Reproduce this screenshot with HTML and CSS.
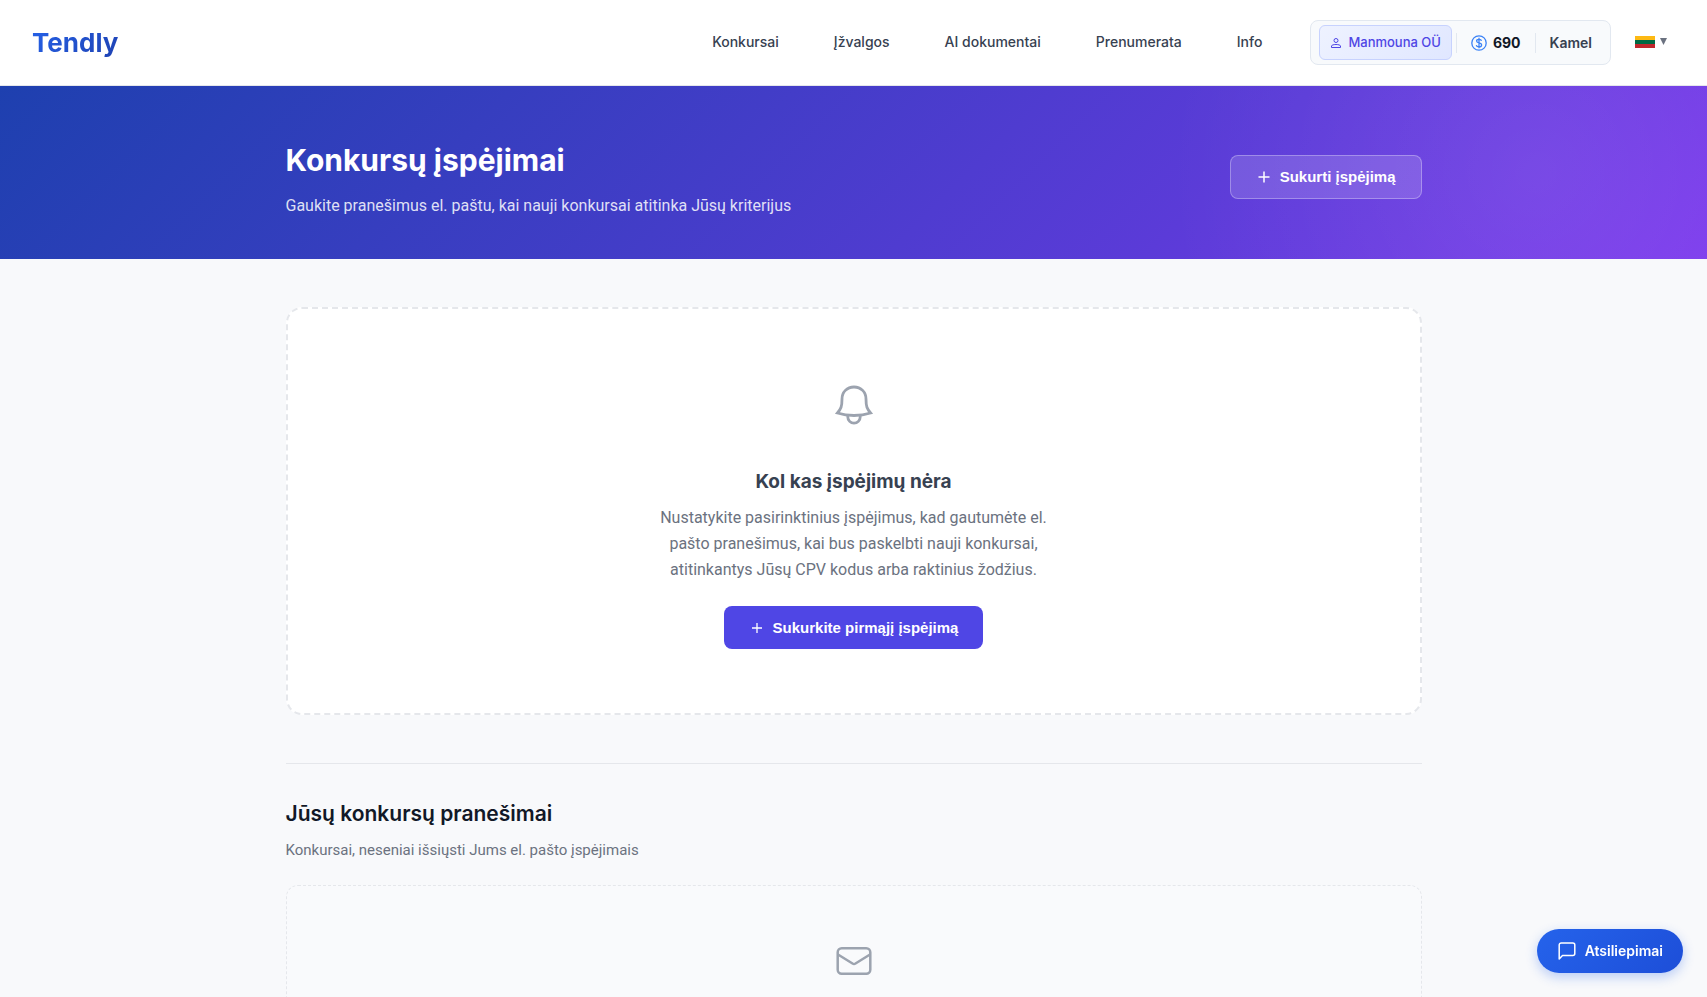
FILE: index.html
```
<!DOCTYPE html>
<html lang="lt">
<head>
  <meta charset="UTF-8">
  <meta name="viewport" content="width=device-width, initial-scale=1.0">
  <title>Konkursų įspėjimai - Tendly</title>
  <link rel="stylesheet" href="styles.css">
</head>
<body>
  <header class="header">
    <a href="#" class="logo">Tendly</a>
    <nav class="nav">
      <a href="#">Konkursai</a>
      <a href="#">Įžvalgos</a>
      <a href="#">AI dokumentai</a>
      <a href="#">Prenumerata</a>
      <a href="#">Info</a>
    </nav>
    <div class="user-box">
      <a href="#" class="company">
        <svg width="12" height="12" viewBox="0 0 12 12" fill="none" stroke="currentColor">
          <circle cx="6" cy="3.500" r="2"/>
          <path d="M1.500 10.500V9c0-.8 2-1.500 4.500-1.500s4.500.7 4.500 1.500v1.500z"/>
        </svg>
        Manmouna OÜ
      </a>
      <a href="#" class="credits">
        <svg width="16" height="16" viewBox="0 0 16 16" fill="none" stroke="currentColor" stroke-width="1.300">
          <circle cx="8" cy="8" r="7.200"/>
          <path d="M10.500 5.800C10.300 4.800 9.300 4.300 8 4.300S5.600 4.900 5.600 6s1 1.600 2.400 1.900 2.600.8 2.600 2-1.200 1.900-2.600 1.900-2.500-.6-2.700-1.700M8 2.800v10.400"/>
        </svg>
        690
      </a>
      <a href="#" class="user-name">Kamel</a>
    </div>
    <button class="lang" aria-label="Kalba">
      <svg class="flag" width="20" height="12" viewBox="0 0 20 12">
        <path fill="#fdb913" d="M0 0h20v4H0z"/>
        <path fill="#006a44" d="M0 4h20v4H0z"/>
        <path fill="#c1272d" d="M0 8h20v4H0z"/>
      </svg>
      <svg width="7" height="7" viewBox="0 0 7 7"><path fill="#6b7280" d="M0 0h7L3.500 7z"/></svg>
    </button>
  </header>

  <section class="hero">
    <div class="container hero-content">
      <div>
        <h1>Konkursų įspėjimai</h1>
        <p>Gaukite pranešimus el. paštu, kai nauji konkursai atitinka Jūsų kriterijus</p>
      </div>
      <button class="btn btn-glass">
        <svg width="16" height="16" viewBox="0 0 16 16" fill="none" stroke="currentColor" stroke-width="1.500"><path d="M8 2.500v11M2.500 8h11"/></svg>
        Sukurti įspėjimą
      </button>
    </div>
  </section>

  <main class="container">
    <section class="empty-state">
      <div class="empty-icon">
        <svg width="48" height="48" viewBox="0 0 48 48" fill="none" stroke="currentColor" stroke-width="2.800" stroke-linejoin="miter">
          <path d="M24 6c-7 0-12 5-12 12 0 7.500-1 10-4.600 14 5 1.600 10 2.500 16.600 2.500s11.600-.9 16.600-2.500C37 28 36 25.500 36 18c0-7-5-12-12-12z"/>
          <path d="M17.800 34.500v1.500a6.200 6.200 0 0 0 12.400 0v-1.500"/>
        </svg>
      </div>
      <h3>Kol kas įspėjimų nėra</h3>
      <p>Nustatykite pasirinktinius įspėjimus, kad gautumėte el. pašto pranešimus, kai bus paskelbti nauji konkursai, atitinkantys Jūsų CPV kodus arba raktinius žodžius.</p>
      <button class="btn btn-primary">
        <svg width="16" height="16" viewBox="0 0 16 16" fill="none" stroke="currentColor" stroke-width="1.300"><path d="M8 3v10M3 8h10"/></svg>
        Sukurkite pirmąjį įspėjimą
      </button>
    </section>

    <section class="notifications">
      <h2>Jūsų konkursų pranešimai</h2>
      <p class="subtitle">Konkursai, neseniai išsiųsti Jums el. pašto įspėjimais</p>
      <div class="notifications-empty">
        <svg width="48" height="48" viewBox="0 0 48 48" fill="none" stroke="currentColor" stroke-width="2.500" stroke-linejoin="round">
          <rect x="7.700" y="11.200" width="32.600" height="25.600" rx="4"/>
          <path d="M8 17.500l14.500 9a3 3 0 0 0 3 0l14.500-9"/>
        </svg>
      </div>
    </section>
  </main>

  <button class="feedback">
    <svg width="20" height="20" viewBox="0 0 20 20" fill="none" stroke="currentColor" stroke-width="1.500" stroke-linejoin="round">
      <path d="M2.200 18V4a2 2 0 0 1 2-2h11.600a2 2 0 0 1 2 2v8.500a2 2 0 0 1-2 2H5.500z"/>
    </svg>
    Atsiliepimai
  </button>
</body>
</html>
```
FILE: styles.css
```
* {
  box-sizing: border-box;
  margin: 0;
  padding: 0;
}

body {
  font-family: Inter, "Liberation Sans", sans-serif;
  font-size: 16px;
  line-height: 26px;
  color: #111827;
  background: #f8f9fb;
  overflow-x: hidden;
}

html {
  scrollbar-width: none;
}

a {
  color: inherit;
  text-decoration: none;
}

button {
  font-family: inherit;
  cursor: pointer;
}

p {
  font-family: Roboto, Inter, sans-serif;
}

svg {
  display: block;
  flex-shrink: 0;
}

.container {
  max-width: 1200px;
  margin: 0 auto;
  padding: 0 32px;
}

/* header */
.header {
  display: flex;
  align-items: center;
  padding: 20px 40px 20px 32px;
  background: #fff;
  border-bottom: 1px solid #e5e7eb;
}

.logo {
  font-size: 26px;
  font-weight: 700;
  line-height: 45px;
  background: linear-gradient(135deg, #2563eb, #1e40af);
  -webkit-background-clip: text;
  background-clip: text;
  color: transparent;
}

.nav {
  display: flex;
  gap: 55px;
  margin-left: auto;
  margin-right: 48px;
  padding-bottom: 2px;
  font-size: 14px;
  font-weight: 500;
  color: #374151;
}

.user-box {
  display: flex;
  align-items: center;
  padding: 4px 8px;
  background: #f8fafc;
  border: 1px solid #e2e8f0;
  border-radius: 8px;
  font-size: 14px;
  font-weight: 600;
  line-height: 20px;
}

.company {
  display: flex;
  align-items: center;
  gap: 6px;
  padding: 0 10px;
  margin-right: 4px;
  line-height: 33px;
  font-size: 13px;
  font-weight: 500;
  color: #4f46e5;
  background: linear-gradient(135deg, #eef2ff, #e0e7ff);
  border: 1px solid #c7d2fe;
  border-radius: 6px;
}

.credits {
  display: flex;
  align-items: center;
  gap: 6px;
  padding: 0 14px;
  border-left: 1px solid #e2e8f0;
  border-right: 1px solid #e2e8f0;
  font-weight: 700;
}

.credits svg {
  color: #3b82f6;
}

.user-name {
  padding: 0 10px 0 14px;
  color: #374151;
}

.lang {
  display: flex;
  align-items: center;
  gap: 5px;
  margin-left: 24px;
  padding-bottom: 2px;
  background: none;
  border: none;
}

/* hero */
.hero {
  padding: 48px 0 40px;
  color: #fff;
  background: radial-gradient(circle at 90% 50%, rgba(255, 255, 255, 0.08), transparent 24%), linear-gradient(135deg, #1e40af 0%, #5b3bd8 70%, #7c3aed 100%);
}

.hero-content {
  display: flex;
  align-items: center;
  justify-content: space-between;
}

.hero h1 {
  margin-bottom: 7px;
  font-size: 30px;
  font-weight: 700;
  line-height: 52px;
}

.hero p {
  color: rgba(255, 255, 255, 0.85);
}

.btn {
  display: inline-flex;
  align-items: center;
  gap: 8px;
  padding: 0 25px;
  border: none;
  border-radius: 8px;
  font-family: "Liberation Sans", Arial, sans-serif;
  font-size: 15px;
  font-weight: 700;
  line-height: 43px;
  color: #fff;
}

.btn-glass {
  line-height: 42px;
  background: rgba(255, 255, 255, 0.15);
  border: 1px solid rgba(255, 255, 255, 0.3);
}

.btn-primary {
  background: #4f46e5;
}

/* alerts */
.empty-state {
  margin-top: 48px;
  padding: 64px 32px;
  text-align: center;
  background: #fff;
  border: 2px dashed #e5e7eb;
  border-radius: 16px;
}

.empty-icon {
  display: flex;
  justify-content: center;
  padding: 8px;
  margin-bottom: 28px;
  color: #9ca3af;
}

.empty-state h3 {
  margin-bottom: 7px;
  font-size: 19px;
  font-weight: 700;
  line-height: 33px;
  color: #374151;
}

.empty-state p {
  max-width: 400px;
  margin: 0 auto 23px;
  color: #6b7280;
}

.notifications {
  margin-top: 48px;
  padding: 32px 0 48px;
  border-top: 1px solid #e5e7eb;
}

.notifications h2 {
  margin-bottom: 7px;
  font-size: 21px;
  font-weight: 600;
  line-height: 35px;
}

.subtitle {
  margin-bottom: 23px;
  font-size: 15px;
  line-height: 24px;
  color: #6b7280;
}

.notifications-empty {
  display: flex;
  justify-content: center;
  padding: 51px 32px;
  color: #9ca3af;
  background: #f9fafc;
  border: 1px dashed #e5e7eb;
  border-radius: 12px;
}

.feedback {
  position: fixed;
  right: 24px;
  bottom: 24px;
  display: flex;
  align-items: center;
  gap: 8px;
  padding: 0 20px;
  border: none;
  border-radius: 22px;
  font-size: 14px;
  font-weight: 600;
  line-height: 44px;
  color: #fff;
  background: linear-gradient(135deg, #2563eb, #1d4ed8);
  box-shadow: 0 4px 12px rgba(37, 99, 235, 0.3);
}
```
